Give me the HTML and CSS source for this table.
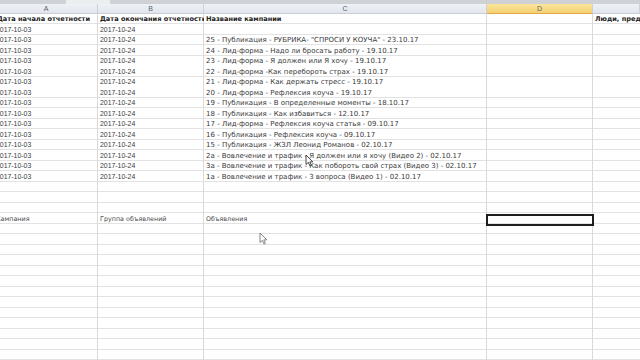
FILE: index.html
```html
<!DOCTYPE html>
<html lang="ru">
<head>
<meta charset="utf-8">
<title>Отчет</title>
<link rel="stylesheet" href="styles.css">
</head>
<body>
<div class="app">
  <div class="topstrip"><div class="strip-tab"></div></div>
  <div class="colheads">
    <div class="ch">A</div>
    <div class="ch">B</div>
    <div class="ch">C</div>
    <div class="ch ch-active">D</div>
    <div class="ch"></div>
  </div>
  <div class="sheet">
    <div class="row hdr"><div class="c a">Дата начала отчетности</div><div class="c b">Дата окончания отчетности</div><div class="c t">Название кампании</div><div class="c d"></div><div class="c e">Люди, предпринявшие действие</div></div>
    <div class="row"><div class="c a">2017-10-03</div><div class="c b">2017-10-24</div><div class="c t"></div><div class="c d"></div><div class="c e"></div></div>
    <div class="row"><div class="c a">2017-10-03</div><div class="c b">2017-10-24</div><div class="c t">25 - Публикация - РУБРИКА- "СПРОСИ У КОУЧА" - 23.10.17</div><div class="c d"></div><div class="c e"></div></div>
    <div class="row"><div class="c a">2017-10-03</div><div class="c b">2017-10-24</div><div class="c t">24 - Лид-форма - Надо ли бросать работу - 19.10.17</div><div class="c d"></div><div class="c e"></div></div>
    <div class="row"><div class="c a">2017-10-03</div><div class="c b">2017-10-24</div><div class="c t">23 - Лид-форма - Я должен или Я хочу - 19.10.17</div><div class="c d"></div><div class="c e"></div></div>
    <div class="row"><div class="c a">2017-10-03</div><div class="c b">2017-10-24</div><div class="c t">22 - Лид-форма -Как перебороть страх - 19.10.17</div><div class="c d"></div><div class="c e"></div></div>
    <div class="row"><div class="c a">2017-10-03</div><div class="c b">2017-10-24</div><div class="c t">21 - Лид-форма - Как держать стресс - 19.10.17</div><div class="c d"></div><div class="c e"></div></div>
    <div class="row"><div class="c a">2017-10-03</div><div class="c b">2017-10-24</div><div class="c t">20 - Лид-форма - Рефлексия коуча - 19.10.17</div><div class="c d"></div><div class="c e"></div></div>
    <div class="row"><div class="c a">2017-10-03</div><div class="c b">2017-10-24</div><div class="c t">19 - Публикация - В определенные моменты - 18.10.17</div><div class="c d"></div><div class="c e"></div></div>
    <div class="row"><div class="c a">2017-10-03</div><div class="c b">2017-10-24</div><div class="c t">18 - Публикация - Как избавиться - 12.10.17</div><div class="c d"></div><div class="c e"></div></div>
    <div class="row"><div class="c a">2017-10-03</div><div class="c b">2017-10-24</div><div class="c t">17 - Лид-форма - Рефлексия коуча статья - 09.10.17</div><div class="c d"></div><div class="c e"></div></div>
    <div class="row"><div class="c a">2017-10-03</div><div class="c b">2017-10-24</div><div class="c t">16 - Публикация - Рефлексия коуча - 09.10.17</div><div class="c d"></div><div class="c e"></div></div>
    <div class="row"><div class="c a">2017-10-03</div><div class="c b">2017-10-24</div><div class="c t">15 - Публикация - ЖЗЛ Леонид Романов - 02.10.17</div><div class="c d"></div><div class="c e"></div></div>
    <div class="row"><div class="c a">2017-10-03</div><div class="c b">2017-10-24</div><div class="c t">2а - Вовлечение и трафик - Я должен или я хочу (Видео 2) - 02.10.17</div><div class="c d"></div><div class="c e"></div></div>
    <div class="row"><div class="c a">2017-10-03</div><div class="c b">2017-10-24</div><div class="c t">3а - Вовлечение и трафик - Как побороть свой страх (Видео 3) - 02.10.17</div><div class="c d"></div><div class="c e"></div></div>
    <div class="row"><div class="c a">2017-10-03</div><div class="c b">2017-10-24</div><div class="c t">1а - Вовлечение и трафик - 3 вопроса (Видео 1) - 02.10.17</div><div class="c d"></div><div class="c e"></div></div>
    <div class="row"><div class="c a"></div><div class="c b"></div><div class="c t"></div><div class="c d"></div><div class="c e"></div></div>
    <div class="row"><div class="c a"></div><div class="c b"></div><div class="c t"></div><div class="c d"></div><div class="c e"></div></div>
    <div class="row"><div class="c a"></div><div class="c b"></div><div class="c t"></div><div class="c d"></div><div class="c e"></div></div>
    <div class="row lower"><div class="c a">Кампания</div><div class="c b">Группа объявлений</div><div class="c t">Объявления</div><div class="c d sel"></div><div class="c e"></div></div>
  </div>
  <svg class="cursor cursor-1" width="9" height="13" viewBox="0 0 9 13"><path d="M1 1 L1 10.5 L3.3 8.4 L5 12 L6.4 11.3 L4.8 7.9 L7.8 7.9 Z" fill="#fff" stroke="#333" stroke-width="0.9" stroke-linejoin="round"/></svg>
  <svg class="cursor cursor-2" width="9" height="13" viewBox="0 0 9 13"><path d="M1 1 L1 10.5 L3.3 8.4 L5 12 L6.4 11.3 L4.8 7.9 L7.8 7.9 Z" fill="#fff" stroke="#777" stroke-width="0.9" stroke-linejoin="round"/></svg>
</div>
</body>
</html>
```
FILE: styles.css
```css
html, body {
  margin: 0;
  padding: 0;
  background: #ffffff;
}
.app {
  position: relative;
  width: 640px;
  height: 360px;
  overflow: hidden;
  background: #fff;
  font-family: "DejaVu Sans", Verdana, sans-serif;
  color: #2e2e2e;
}
.topstrip {
  height: 4px;
  background: #cfd1d4;
  display: flex;
}
.strip-tab {
  margin-left: 66px;
  width: 44px;
  background: #eceef0;
}
.colheads {
  display: grid;
  grid-template-columns: 103px 106px 283px 106px 1fr;
  margin-left: -5px;
  height: 10px;
  background: linear-gradient(#eef1f5, #e2e6ec);
  border-bottom: 1px solid #c9ced6;
  box-sizing: border-box;
}
.ch {
  border-right: 1px solid #cdd2d9;
  font-family: "Liberation Sans", Arial, sans-serif;
  font-size: 7px;
  line-height: 9px;
  text-align: center;
  color: #5a6270;
}
.ch-active {
  background: linear-gradient(#fbe49a, #f4d173);
  border-bottom: 1px solid #e0a84a;
}
.sheet {
  margin-left: -5px;
  height: 346px;
  background-image:
    linear-gradient(#dadada, #dadada),
    linear-gradient(#dadada, #dadada),
    linear-gradient(#dadada, #dadada),
    linear-gradient(#dadada, #dadada),
    repeating-linear-gradient(to bottom, transparent 0, transparent 9.5px, #e2e2e2 9.5px, #e2e2e2 10.5px);
  background-size: 1px 100%, 1px 100%, 1px 100%, 1px 100%, 100% 100%;
  background-position: 102px 0, 208px 0, 491px 0, 597px 0, 0 0;
  background-repeat: no-repeat, no-repeat, no-repeat, no-repeat, repeat;
}
.row {
  display: grid;
  grid-template-columns: 103px 106px 283px 106px 1fr;
  height: 10.5px;
}
.c {
  padding-left: 2px;
  white-space: nowrap;
  overflow: hidden;
  font-size: 7.2px;
  line-height: 10px;
  box-sizing: border-box;
  color: #3a3a3a;
}
.a {
  padding-left: 1px;
}
.a, .b {
  font-family: "Liberation Sans", Arial, sans-serif;
  font-size: 6.9px;
}
.t {
  font-family: "DejaVu Sans", Verdana, sans-serif;
  font-size: 7px;
  letter-spacing: 0;
  overflow: visible;
  color: #3a3a3a;
}
.hdr .c {
  font-weight: bold;
  font-family: "DejaVu Sans", Verdana, sans-serif;
  font-size: 6.6px;
  letter-spacing: 0;
  color: #222;
}
.hdr .a {
  padding-left: 2px;
}
.lower .c {
  font-family: "DejaVu Sans", Verdana, sans-serif;
  font-size: 6.4px;
  letter-spacing: 0;
  color: #4a4a4a;
}
.sel {
  border: 2px solid #1e1e1e;
  margin-left: -1px;
  width: 108px;
  height: 12px;
  margin-top: 0.5px;
}
.cursor {
  position: absolute;
}
.cursor-1 {
  left: 305px;
  top: 154px;
}
.cursor-2 {
  left: 259px;
  top: 232px;
}
```
